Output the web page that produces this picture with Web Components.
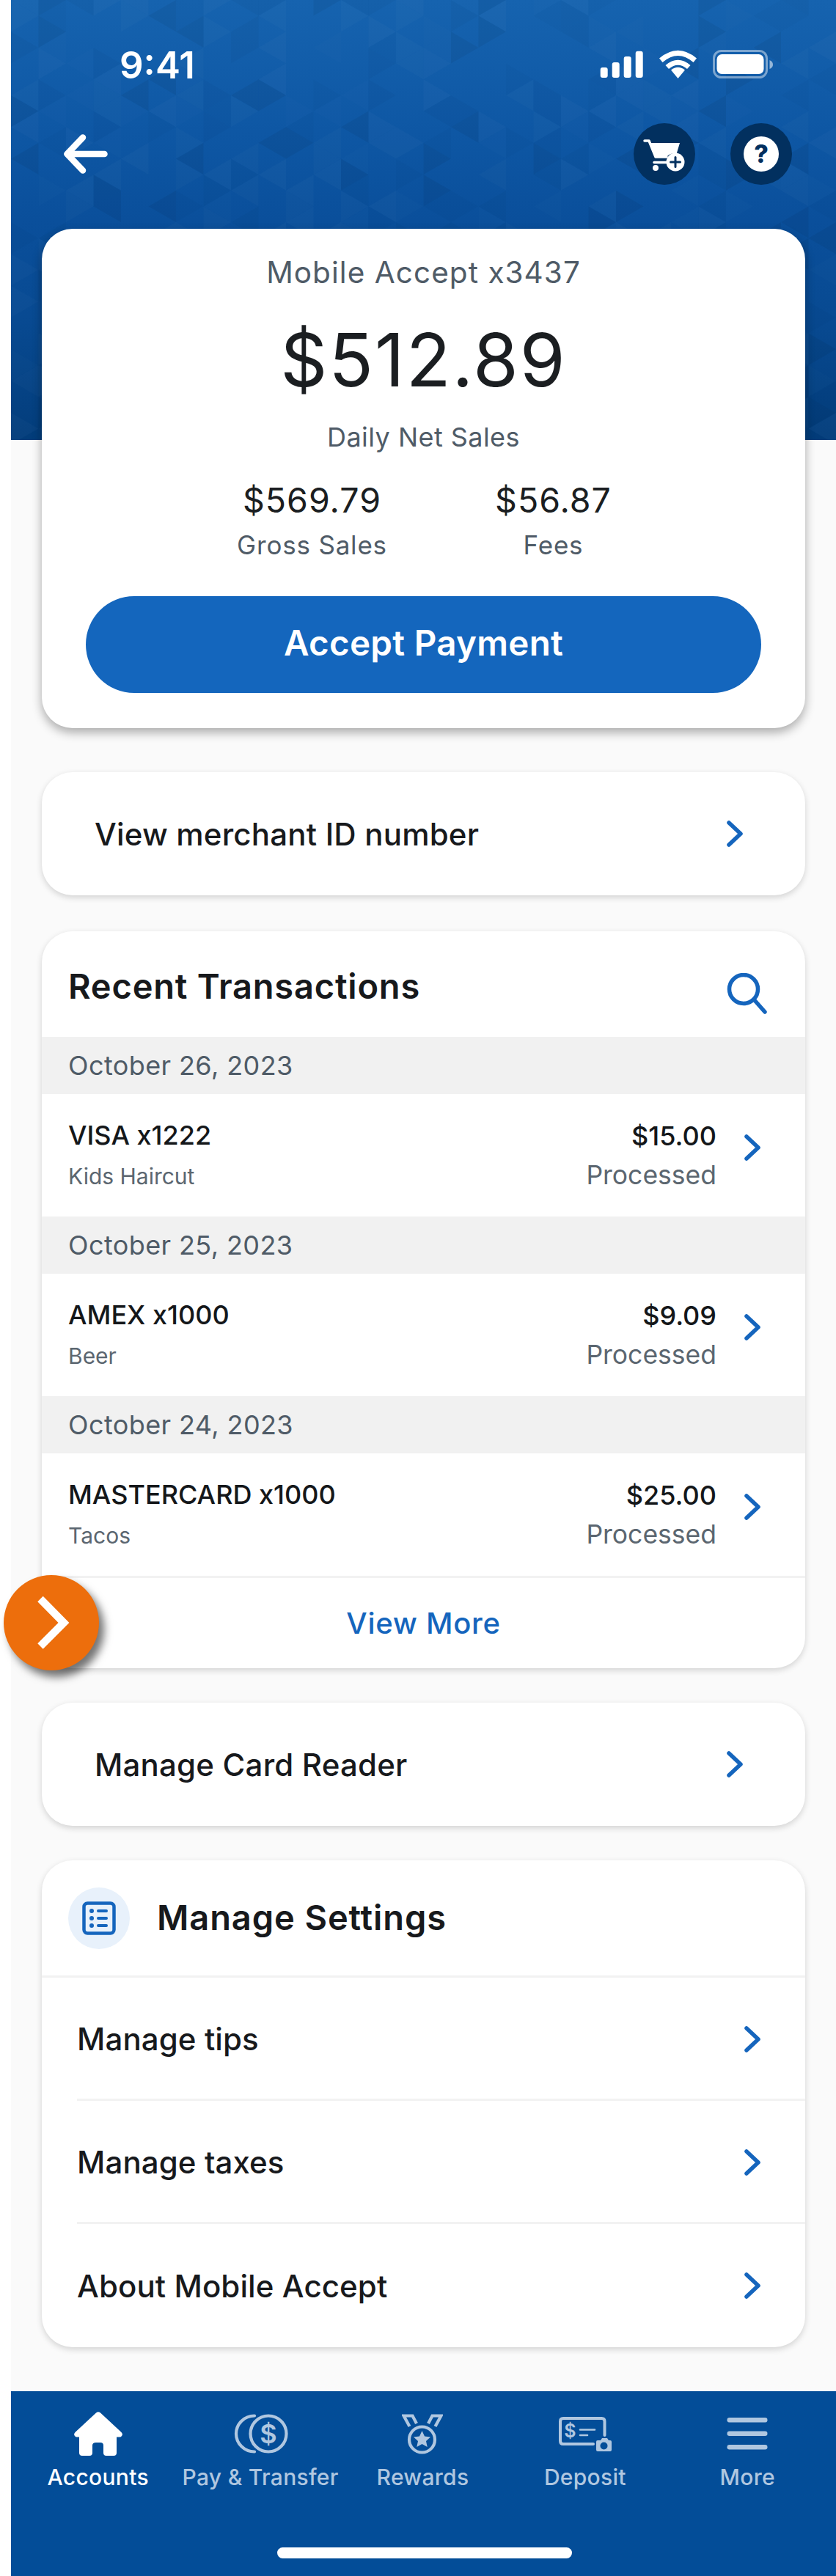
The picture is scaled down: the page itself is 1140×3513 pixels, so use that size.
<!DOCTYPE html>
<html>
<head>
<meta charset="utf-8">
<title>Mobile Accept</title>
<style>
  html, body { margin: 0; padding: 0; background: #fff; }
  body { font-family: Inter, "Noto Sans", sans-serif; color: #17191c; }
</style>
</head>
<body>
<app-shell>
  <hero-header></hero-header>
  <sales-card></sales-card>
  <link-card style="margin-top:60px">View merchant ID number</link-card>
  <recent-transactions style="margin-top:49px">
    <txn-date>October 26, 2023</txn-date>
    <txn-row name="VISA x1222" memo="Kids Haircut" amount="$15.00"></txn-row>
    <txn-date>October 25, 2023</txn-date>
    <txn-row name="AMEX x1000" memo="Beer" amount="$9.09"></txn-row>
    <txn-date>October 24, 2023</txn-date>
    <txn-row name="MASTERCARD x1000" memo="Tacos" amount="$25.00"></txn-row>
  </recent-transactions>
  <link-card style="margin-top:47px">Manage Card Reader</link-card>
  <settings-card style="margin-top:47px">
    <settings-row>Manage tips</settings-row>
    <settings-row>Manage taxes</settings-row>
    <settings-row last>About Mobile Accept</settings-row>
  </settings-card>
  <bottom-nav>
    <nav-item icon="home" active>Accounts</nav-item>
    <nav-item icon="pay">Pay &amp; Transfer</nav-item>
    <nav-item icon="rewards">Rewards</nav-item>
    <nav-item icon="deposit">Deposit</nav-item>
    <nav-item icon="more">More</nav-item>
  </bottom-nav>
  <float-toggle></float-toggle>
</app-shell>

<script>
const CHEVRON = `<svg width="22" height="36" viewBox="0 0 22 36" fill="none"><path d="M3 3 L19 18 L3 33" stroke="#1565bd" stroke-width="5.5" stroke-linecap="round" stroke-linejoin="round"/></svg>`;

class AppShell extends HTMLElement {
  constructor() {
    super();
    this.attachShadow({ mode: 'open' }).innerHTML = `
      <style>
        :host { display: block; position: relative; margin-left: 15px; height: 3513px; background: #fafafa; }
        .col { display: flex; flex-direction: column; height: 100%; }
      </style>
      <div class="col"><slot></slot></div>`;
  }
}

class HeroHeader extends HTMLElement {
  constructor() {
    super();
    this.attachShadow({ mode: 'open' }).innerHTML = `
      <style>
        :host { display: block; position: relative; height: 600px; flex: none; overflow: hidden;
          background: linear-gradient(180deg, #1663af 0%, #0e57a4 30%, #0a4f9b 50%, #084a92 72%, #033d7b 100%); }
        svg.bg { position: absolute; left: 0; top: 0; }
        .content { position: relative; }
        .status { display: flex; align-items: center; justify-content: space-between; height: 44px;
          padding: 66px 86px 0 148px; }
        .time { color: #fff; font-size: 51px; font-weight: 600; line-height: 44px; position: relative; top: 1px; }
        .tools { display: flex; align-items: center; justify-content: space-between; height: 84px;
          padding: 58px 60px 0 72px; }
        .right { display: flex; gap: 48px; }
        .round { width: 84px; height: 84px; border-radius: 50%; background: #02305f; display: block; }
      </style>
      <svg class="bg" width="1125" height="600"></svg>
      <div class="content">
        <div class="status">
          <span class="time">9:41</span>
          <svg width="236" height="40" viewBox="818 69 236 40">
            <g fill="#fff">
              <rect x="818.7" y="93" width="10" height="14" rx="3"/>
              <rect x="834.7" y="86" width="10" height="21" rx="3"/>
              <rect x="850.7" y="78" width="10" height="29" rx="3"/>
              <rect x="866.7" y="70.7" width="10" height="36.3" rx="3"/>
              <path d="M924.5 108 L915 96.5 Q924.5 89 934 96.5 Z"/>
              <path d="M899 80.5 Q924.5 59 950 80.5 L945.5 86 Q924.5 68 903.5 86 Z"/>
              <path d="M907.5 90 Q924.5 75.5 941.5 90 L937 95 Q924.5 84.5 912 95 Z"/>
              <rect x="977.5" y="75" width="64" height="27" rx="7"/>
              <path d="M1049.5 83 Q1054 85 1054 89 Q1054 93 1049.5 95 Z" opacity=".55"/>
            </g>
            <rect x="973.5" y="70.5" width="72" height="36" rx="10" fill="none" stroke="#fff" stroke-opacity=".45" stroke-width="3"/>
          </svg>
        </div>
        <div class="tools">
          <svg width="60" height="54" viewBox="0 0 60 54" fill="none" stroke="#fff" stroke-width="8.5" stroke-linecap="round" stroke-linejoin="round">
            <path d="M4.5 27 H55.5 M26 4.5 L4.5 27 L26 49.5"/>
          </svg>
          <div class="right">
            <svg class="round" viewBox="0 0 84 84">
              <path d="M15 24 H21 L30 46 H45" fill="none" stroke="#fff" stroke-width="3.5" stroke-linecap="round" stroke-linejoin="round"/>
              <path d="M22 27 H63 L58.5 42 Q50 40 45.5 45.5 H29 Z" fill="#fff"/>
              <path d="M28 53.5 H45" stroke="#fff" stroke-width="3.5" stroke-linecap="round"/>
              <circle cx="30" cy="61" r="4" fill="#fff"/>
              <circle cx="57" cy="53" r="12.5" fill="#fff"/>
              <path d="M57 46.5 V59.5 M50.5 53 H63.5" stroke="#02305f" stroke-width="3" stroke-linecap="round"/>
            </svg>
            <svg class="round" viewBox="0 0 84 84">
              <circle cx="42" cy="42" r="24" fill="#fff"/>
              <text x="42" y="54" text-anchor="middle" font-family="Inter, sans-serif" font-size="34" font-weight="800" fill="#02305f">?</text>
            </svg>
          </div>
        </div>
      </div>`;
    this.drawPattern();
  }

  // triangle grid behind the header, same seed every time
  drawPattern() {
    const svg = this.shadowRoot.querySelector('svg.bg');
    const w = 37.5;
    const h = 43.3;
    const shades = [null, null, null, null, null, null, '#fff|.012', '#fff|.02', '#fff|.025', '#000|.015', '#000|.025', '#000|.05'];
    let seed = 4127;
    const rnd = () => { seed = (seed * 1664525 + 1013904223) % 4294967296; return seed / 4294967296; };
    let out = '';
    for (let i = 0; i < 31; i++) {
      const x0 = i * w;
      const x1 = x0 + w;
      const odd = i % 2 === 1;
      for (let j = -1; j < 15; j++) {
        const a = odd ? j * h + h / 2 : j * h;
        const b = odd ? j * h : j * h + h / 2;
        const tris = [
          [x0, a, x0, a + h, x1, b + (odd ? h : 0)],
          [x1, b, x1, b + h, x0, a + (odd ? 0 : h)]
        ];
        for (const t of tris) {
          const s = shades[Math.floor(rnd() * shades.length)];
          if (!s) continue;
          const [c, o] = s.split('|');
          out += `<polygon points="${t.map(v => v.toFixed(1)).join(' ')}" fill="${c}" fill-opacity="${o}"/>`;
        }
      }
    }
    svg.innerHTML = out;
  }
}

class SalesCard extends HTMLElement {
  constructor() {
    super();
    this.attachShadow({ mode: 'open' }).innerHTML = `
      <style>
        :host { display: block; flex: none; margin: -288px 42px 0; height: 681px; box-sizing: border-box;
          position: relative; background: #fff; border-radius: 42px; box-shadow: 0 6px 14px rgba(0,0,0,.32);
          padding: 30px 60px 0; text-align: center; }
        .title { font-size: 40.5px; line-height: 60px; color: #4f5b67; letter-spacing: 1.05px; }
        .big { font-size: 100px; line-height: 120px; margin-top: 29px; color: #1b1e21; letter-spacing: 1.9px; }
        .sub { font-size: 36px; line-height: 50px; margin-top: 20px; color: #4f5b67; letter-spacing: .45px; }
        .stats { display: flex; margin: 36px -60px 0; padding-left: 204px; }
        .stat { width: 329px; flex: none; }
        .stat .val { font-size: 46.5px; line-height: 50px; color: #1b1e21; letter-spacing: 1px; }
        .stat .lab { font-size: 35px; line-height: 40px; margin-top: 16px; color: #4f5b67; letter-spacing: .8px; }
        .btn { height: 126px; padding-bottom: 6px; margin-top: 50px; border-radius: 66px; background: #1466bd; color: #fff;
          font-size: 47.5px; font-weight: 600; letter-spacing: .3px; display: flex; align-items: center; justify-content: center; }
      </style>
      <div class="title">Mobile Accept x3437</div>
      <div class="big">$512.89</div>
      <div class="sub">Daily Net Sales</div>
      <div class="stats">
        <div class="stat"><div class="val">$569.79</div><div class="lab">Gross Sales</div></div>
        <div class="stat"><div class="val">$56.87</div><div class="lab">Fees</div></div>
      </div>
      <div class="btn">Accept Payment</div>`;
  }
}

class LinkCard extends HTMLElement {
  constructor() {
    super();
    this.attachShadow({ mode: 'open' }).innerHTML = `
      <style>
        :host { display: flex; flex: none; align-items: center; justify-content: space-between; height: 168px;
          margin: 0 42px; padding: 0 85px 0 72px; background: #fff; border-radius: 42px;
          box-shadow: 0 3px 8px rgba(0,0,0,.16); font-size: 42px; font-weight: 500; color: #17191c; letter-spacing: .2px; }
      </style>
      <span><slot></slot></span>${CHEVRON}`;
  }
}

class RecentTransactions extends HTMLElement {
  constructor() {
    super();
    this.attachShadow({ mode: 'open' }).innerHTML = `
      <style>
        :host { display: block; flex: none; margin: 0 42px; background: #fff; border-radius: 42px;
          box-shadow: 0 3px 8px rgba(0,0,0,.16); overflow: hidden; }
        .head { display: flex; align-items: center; justify-content: space-between; height: 144px;
          padding: 0 51px 0 36px; }
        h2 { margin: 4px 0 0; font-size: 47px; font-weight: 600; color: #17191c; letter-spacing: .8px; }
        .head svg { margin-top: 26px; }
        .more { height: 123px; border-top: 3px solid #f2f2f2; display: flex; align-items: center; justify-content: center;
          font-size: 40px; font-weight: 500; color: #1565bd; letter-spacing: .7px; }
      </style>
      <div class="head">
        <h2>Recent Transactions</h2>
        <svg width="56" height="56" viewBox="0 0 56 56" fill="none" stroke="#1565bd" stroke-width="5.5" stroke-linecap="round">
          <circle cx="23" cy="22" r="19.5"/><path d="M37 36 L52 53"/>
        </svg>
      </div>
      <slot></slot>
      <div class="more">View More</div>`;
  }
}

class TxnDate extends HTMLElement {
  constructor() {
    super();
    this.attachShadow({ mode: 'open' }).innerHTML = `
      <style>
        :host { display: flex; align-items: center; height: 78px; padding-left: 36px; background: #f1f1f1;
          font-size: 36px; color: #4f5b67; letter-spacing: .4px; }
      </style><slot></slot>`;
  }
}

class TxnRow extends HTMLElement {
  constructor() {
    super();
    this.attachShadow({ mode: 'open' }).innerHTML = `
      <style>
        :host { display: flex; align-items: center; height: 167px; padding: 0 61px 0 36px; }
        .left { flex: 1; }
        .right { text-align: right; margin-right: 38px; }
        .name, .amt { font-size: 36px; line-height: 44px; font-weight: 500; color: #14171a; }
        .memo { font-size: 30px; line-height: 44px; margin-top: 12px; color: #5b6670; }
        .stat { font-size: 35.5px; line-height: 44px; margin-top: 10px; color: #5b6670; }
        svg { margin-bottom: 22px; }
      </style>
      <div class="left"><div class="name"></div><div class="memo"></div></div>
      <div class="right"><div class="amt"></div><div class="stat">Processed</div></div>
      ${CHEVRON}`;
    this.shadowRoot.querySelector('.name').textContent = this.getAttribute('name');
    this.shadowRoot.querySelector('.memo').textContent = this.getAttribute('memo');
    this.shadowRoot.querySelector('.amt').textContent = this.getAttribute('amount');
  }
}

class SettingsCard extends HTMLElement {
  constructor() {
    super();
    this.attachShadow({ mode: 'open' }).innerHTML = `
      <style>
        :host { display: block; flex: none; margin: 0 42px; background: #fff; border-radius: 42px;
          box-shadow: 0 3px 8px rgba(0,0,0,.16); overflow: hidden; }
        .head { display: flex; align-items: center; height: 157px; padding-left: 36px;
          border-bottom: 3px solid #f2f2f2; }
        .dot { width: 84px; height: 84px; border-radius: 50%; background: #e8f1fb; display: flex;
          align-items: center; justify-content: center; margin-right: 37px; }
        h2 { margin: 0 0 3px; font-size: 47px; font-weight: 600; color: #17191c; letter-spacing: .9px; }
      </style>
      <div class="head">
        <div class="dot">
          <svg width="46" height="46" viewBox="0 0 46 46">
            <rect x="2.5" y="2.5" width="41" height="41" rx="5" fill="none" stroke="#1565bd" stroke-width="4.5"/>
            <g fill="#1565bd">
              <circle cx="13" cy="13" r="3"/><circle cx="13" cy="23" r="3"/><circle cx="13" cy="33" r="3"/>
              <rect x="20" y="11" width="15" height="4" rx="2"/><rect x="20" y="21" width="15" height="4" rx="2"/><rect x="20" y="31" width="15" height="4" rx="2"/>
            </g>
          </svg>
        </div>
        <h2>Manage Settings</h2>
      </div>
      <slot></slot>`;
  }
}

class SettingsRow extends HTMLElement {
  constructor() {
    super();
    const line = this.hasAttribute('last') ? 'none' : '3px solid #f2f2f2';
    const pad = this.hasAttribute('last') ? 0 : 2;
    this.attachShadow({ mode: 'open' }).innerHTML = `
      <style>
        :host { display: block; margin-left: 48px; }
        .row { display: flex; align-items: center; justify-content: space-between; box-sizing: border-box; height: 168px;
          padding: ${pad}px 61px 0 0; border-bottom: ${line}; font-size: 42px; font-weight: 500; color: #17191c; letter-spacing: .1px; }
      </style>
      <div class="row"><span><slot></slot></span>${CHEVRON}</div>`;
  }
}

class BottomNav extends HTMLElement {
  constructor() {
    super();
    this.attachShadow({ mode: 'open' }).innerHTML = `
      <style>
        :host { display: block; position: relative; flex: none; margin-top: auto; height: 252px; background: #034d98; }
        .items { display: grid; grid-template-columns: repeat(5, 1fr); padding: 24px 10px 0 8px; }
        .bar { position: absolute; left: 363px; top: 213px; width: 402px; height: 15px; border-radius: 8px; background: #fff; }
      </style>
      <div class="items"><slot></slot></div>
      <div class="bar"></div>`;
  }
}

const NAV_ICONS = {
  home: `<svg width="66" height="60" viewBox="0 0 66 60" fill="#fff">
      <path d="M30 1.5 Q33 -1 36 1.5 L64.5 28 Q67 31 65 33 Q64 34.5 62 34.5 H58 V56 Q58 60 54 60 H44 Q40 60 40 56 V46 Q40 42 36 42 H30 Q25 42 25 46 V56 Q25 60 21 60 H11 Q7 60 7 56 V34.5 H4 Q2 34.5 1 33 Q-1 31 1.5 28 Z"/>
    </svg>`,
  pay: `<svg width="76" height="54" viewBox="0 0 76 54" fill="none" stroke="#b0c7e0" stroke-width="4.2">
      <path d="M30 2.5 A25 24.5 0 0 0 30 51.5" stroke-linecap="round"/>
      <circle cx="49" cy="27" r="24.5"/>
      <text x="49" y="40" text-anchor="middle" font-family="Inter, sans-serif" font-size="36" font-weight="600" fill="#b0c7e0" stroke="none">$</text>
    </svg>`,
  rewards: `<svg width="56" height="56" viewBox="550 3290 56 56" fill="none" stroke="#b0c7e0" stroke-width="4.2">
      <path d="M560.5 3308 L552.5 3293.5 H564.5 L570 3304"/>
      <path d="M595.5 3308 L603.5 3293.5 H591.5 L586 3304"/>
      <ellipse cx="577.5" cy="3326" rx="17.5" ry="17.5"/>
      <path d="M577.5 3314 L581 3321.5 L589 3322.5 L583 3328 L584.7 3336 L577.5 3332 L570.3 3336 L572 3328 L566 3322.5 L574 3321.5 Z" fill="#b0c7e0" stroke="none"/>
    </svg>`,
  deposit: `<svg width="74" height="50" viewBox="762 3292 74 50" fill="none" stroke="#b0c7e0" stroke-width="4">
      <path d="M825.5 3319 V3300 Q825.5 3296 821.5 3296 H769 Q765 3296 765 3300 V3327 Q765 3331 769 3331 H810" stroke-linecap="round"/>
      <text x="778.5" y="3322" text-anchor="middle" font-family="Inter, sans-serif" font-size="25" font-weight="600" fill="#b0c7e0" stroke="none">$</text>
      <path d="M792 3311.5 H812 M792 3319 H802" stroke-width="2.6" stroke-linecap="round"/>
      <path d="M816 3326 H820 L822 3323 H829 L831 3326 H833 Q835 3326 835 3328 V3339 Q835 3341 833 3341 H816 Q814 3341 814 3339 V3328 Q814 3326 816 3326 Z" fill="#b0c7e0" stroke="none"/>
      <circle cx="824.5" cy="3333.5" r="5" fill="#034d98" stroke="none"/>
    </svg>`,
  more: `<svg width="56" height="44" viewBox="0 0 56 44" fill="#b0c7e0">
      <rect x="0.5" y="0" width="55" height="6.5" rx="3.2"/><rect x="0.5" y="18.5" width="55" height="6.5" rx="3.2"/><rect x="0.5" y="37" width="55" height="6.5" rx="3.2"/>
    </svg>`
};

class NavItem extends HTMLElement {
  constructor() {
    super();
    const active = this.hasAttribute('active');
    this.attachShadow({ mode: 'open' }).innerHTML = `
      <style>
        :host { display: block; text-align: center; color: ${active ? '#fff' : '#b0c7e0'}; }
        .ico { height: 68px; display: flex; align-items: center; justify-content: center; }
        .lab { margin-top: 5px; font-size: 30px; line-height: 40px; font-weight: 500; white-space: nowrap; letter-spacing: .3px; }
      </style>
      <div class="ico">${NAV_ICONS[this.getAttribute('icon')]}</div>
      <div class="lab"><slot></slot></div>`;
  }
}

class FloatToggle extends HTMLElement {
  constructor() {
    super();
    this.attachShadow({ mode: 'open' }).innerHTML = `
      <style>
        :host { position: absolute; left: -10px; top: 2148px; width: 130px; height: 130px; border-radius: 50%;
          background: #ed6e0c; box-shadow: 7px 9px 12px rgba(0,0,0,.55); display: block; }
        svg { display: block; }
      </style>
      <svg width="130" height="130" viewBox="0 0 130 130" fill="none">
        <path d="M50 32.5 L82 65 L50 97" stroke="#fff" stroke-width="10.5" stroke-linejoin="miter"/>
      </svg>`;
  }
}

customElements.define('app-shell', AppShell);
customElements.define('hero-header', HeroHeader);
customElements.define('sales-card', SalesCard);
customElements.define('link-card', LinkCard);
customElements.define('recent-transactions', RecentTransactions);
customElements.define('txn-date', TxnDate);
customElements.define('txn-row', TxnRow);
customElements.define('settings-card', SettingsCard);
customElements.define('settings-row', SettingsRow);
customElements.define('bottom-nav', BottomNav);
customElements.define('nav-item', NavItem);
customElements.define('float-toggle', FloatToggle);
</script>
</body>
</html>
